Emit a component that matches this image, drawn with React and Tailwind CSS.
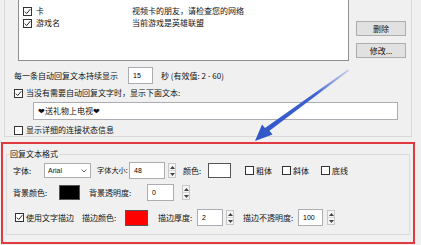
import React from "react"

const cjk = { fontFamily: '"Noto Sans CJK SC", "Liberation Sans", sans-serif' }
const latin = { fontFamily: '"Liberation Sans", sans-serif' }

function Check({ checked }) {
    return (
        <span className="inline-flex w-[9px] h-[9px] shrink-0 items-center justify-center border border-[#333333] bg-white">
            {checked && (
                <svg width="7" height="7" viewBox="0 0 7 7">
                    <path d="M0.8 3.6 L2.7 5.5 L6.3 1.2" fill="none" stroke="#222" strokeWidth="1" />
                </svg>
            )}
        </span>
    )
}

function Spin() {
    return (
        <div className="flex flex-col w-[8px] h-[15px] border border-[#c8c8c8] bg-[#f4f4f4]">
            <div className="flex-1 flex items-center justify-center border-b border-[#d6d6d6]">
                <svg width="5" height="3" viewBox="0 0 5 3"><path d="M0 3 L2.5 0 L5 3 Z" fill="#444" /></svg>
            </div>
            <div className="flex-1 flex items-center justify-center">
                <svg width="5" height="3" viewBox="0 0 5 3"><path d="M0 0 L2.5 3 L5 0 Z" fill="#444" /></svg>
            </div>
        </div>
    )
}

function Field({ w, value }) {
    return (
        <div className={`${w} h-[17px] shrink-0 border border-[#abadb3] bg-white flex items-center pl-[4px] text-[7px] text-black`} style={latin}>
            {value}
        </div>
    )
}

export default function App() {
    return (
        <div className="relative w-[421px] h-[245px] overflow-hidden whitespace-nowrap bg-[#f0f0f0] text-[8px] leading-none text-[#111]" style={cjk}>
            {/* upper settings group */}
            <div className="ml-[4px] w-[408px] h-[137px] border border-t-0 border-[#d9d9d9] flex flex-col">
                <div className="flex">
                    <div className="ml-[13px] w-[331px] h-[61px] border border-t-0 border-[#8e8f8f] bg-white overflow-hidden pt-[5px]">
                        <div className="flex h-[12px] items-center">
                            <span className="ml-[4px]"><Check checked /></span>
                            <span className="ml-[4px] w-[96px]">卡</span>
                            <span>视频卡的朋友，请检查您的网络</span>
                        </div>
                        <div className="flex h-[12px] items-center">
                            <span className="ml-[4px]"><Check checked /></span>
                            <span className="ml-[4px] w-[96px]">游戏名</span>
                            <span>当前游戏是英雄联盟</span>
                        </div>
                    </div>
                    <div className="ml-[7px] flex flex-col gap-[7px] pt-[21px]">
                        <div className="w-[50px] h-[15px] border border-[#adadad] bg-[#e1e1e1] flex items-center justify-center">删除</div>
                        <div className="w-[50px] h-[15px] border border-[#adadad] bg-[#e1e1e1] flex items-center justify-center">修改...</div>
                    </div>
                </div>

                <div className="flex items-center mt-[6px] h-[17px]">
                    <span className="ml-[9px] w-[114px]">每一条自动回复文本持续显示</span>
                    <Field w="w-[25px]" value="15" />
                    <span className="ml-[8px]">秒 (有效值: 2 - 60)</span>
                </div>

                <div className="flex items-center mt-[4px] h-[10px] ml-[9px] gap-[3px]">
                    <Check checked />
                    <span>当没有需要自动回复文字时，显示下面文本:</span>
                </div>

                <div className="ml-[28px] mt-[4px] w-[365px] h-[18px] border border-[#abadb3] bg-white flex items-center pl-[4px]">
                    ❤送礼物上电视❤
                </div>

                <div className="flex items-center mt-[5px] h-[10px] ml-[9px] gap-[3px]">
                    <Check />
                    <span>显示详细的连接状态信息</span>
                </div>
            </div>

            {/* highlighted text format group */}
            <div className="mt-[5px] ml-[1px] w-[414px] h-[102px] border-2 border-[#e0393e]">
                <div className="mt-[10px] mx-[3px] h-[81px] border border-[#dcdcdc] relative">
                    <span className="absolute left-[2px] top-[-5px] bg-[#f0f0f0] px-[1px]">回复文本格式</span>

                    <div className="flex items-center mt-[8px] h-[15px]">
                        <span className="ml-[6px] w-[31px] shrink-0">字体:</span>
                        <div className="w-[47px] h-[15px] shrink-0 border border-[#abadb3] bg-white flex items-center justify-between px-[3px]">
                            <span className="text-[7px]" style={latin}>Arial</span>
                            <svg width="6" height="4" viewBox="0 0 6 4"><path d="M0.5 0.5 L3 3 L5.5 0.5" fill="none" stroke="#555" strokeWidth="0.9" /></svg>
                        </div>
                        <span className="ml-[6px] w-[32px] shrink-0 text-[7.2px]">字体大小:</span>
                        <Field w="w-[36px]" value="48" />
                        <span className="ml-[3px]"><Spin /></span>
                        <span className="ml-[7px] w-[25px] shrink-0">颜色:</span>
                        <div className="w-[23px] h-[15px] shrink-0 border border-[#555] bg-white" />
                        <div className="ml-[14px] flex items-center gap-[2px]"><Check /><span>粗体</span></div>
                        <div className="ml-[10px] flex items-center gap-[2px]"><Check /><span>斜体</span></div>
                        <div className="ml-[12px] flex items-center gap-[2px]"><Check /><span>底线</span></div>
                    </div>

                    <div className="flex items-center mt-[7px] h-[15px]">
                        <span className="ml-[6px] w-[46px] shrink-0">背景颜色:</span>
                        <div className="w-[21px] h-[15px] shrink-0 border border-[#555] bg-black" />
                        <span className="ml-[9px] w-[58px] shrink-0">背景透明度:</span>
                        <Field w="w-[27px]" value="0" />
                        <span className="ml-[8px]"><Spin /></span>
                    </div>

                    <div className="flex items-center mt-[9px] h-[17px]">
                        <span className="ml-[8px]"><Check checked /></span>
                        <span className="ml-[2px] w-[56px] shrink-0">使用文字描边</span>
                        <span className="w-[43px] shrink-0">描边颜色:</span>
                        <div className="w-[23px] h-[16px] shrink-0 border border-[#555] bg-[#ff0000]" />
                        <span className="ml-[10px] w-[39px] shrink-0">描边厚度:</span>
                        <Field w="w-[26px]" value="2" />
                        <span className="ml-[3px]"><Spin /></span>
                        <span className="ml-[9px] w-[55px] shrink-0">描边不透明度:</span>
                        <Field w="w-[25px]" value="100" />
                        <span className="ml-[4px]"><Spin /></span>
                    </div>
                </div>
            </div>

            {/* annotation arrow */}
            <svg className="absolute left-0 top-0 pointer-events-none" width="421" height="245" viewBox="0 0 421 245">
                <defs>
                    <linearGradient id="ag" x1="348" y1="70" x2="256" y2="140" gradientUnits="userSpaceOnUse">
                        <stop offset="0" stopColor="#9fb2e6" stopOpacity="0.6" />
                        <stop offset="0.35" stopColor="#3f63cf" />
                        <stop offset="1" stopColor="#2f55c8" />
                    </linearGradient>
                </defs>
                <path d="M348 69.5 L349 70.8 L269.5 130.8 L272.5 134.5 L255 141 L262 124.5 L265 128 Z" fill="url(#ag)" />
            </svg>
        </div>
    )
}
